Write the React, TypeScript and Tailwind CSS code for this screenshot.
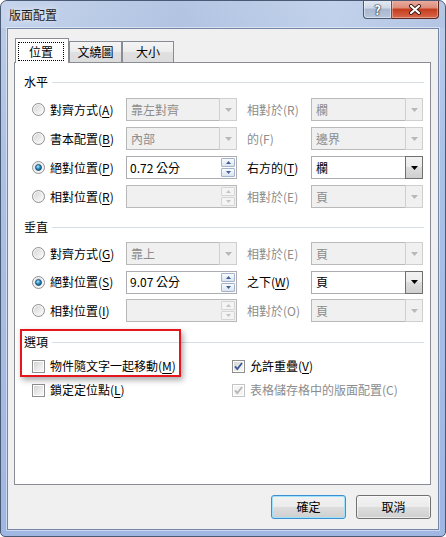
import React from 'react';

function Acc({ t, k, dis }: { t: string; k: string; dis?: boolean }) {
  return (
    <span className={dis ? 'whitespace-nowrap text-[#8c8c8c]' : 'whitespace-nowrap text-black'}>
      {t}({dis ? k : <span className="underline decoration-1 underline-offset-[2px]">{k}</span>})
    </span>
  );
}

function Radio({ on }: { on?: boolean }) {
  return (
    <svg width="13" height="13" viewBox="0 0 13 13" className="shrink-0">
      <defs>
        <linearGradient id="rb" x1="0" y1="0" x2="1" y2="1">
          <stop offset="0" stopColor="#d6d6d6" />
          <stop offset="1" stopColor="#fbfbfb" />
        </linearGradient>
        <radialGradient id="rd" cx="0.4" cy="0.35" r="0.7">
          <stop offset="0" stopColor="#b4eeff" />
          <stop offset="0.5" stopColor="#2b8fca" />
          <stop offset="1" stopColor="#0e4a79" />
        </radialGradient>
      </defs>
      <circle cx="6.5" cy="6.5" r="6" fill="#f4f4f4" stroke="#8f8f8f" />
      <circle cx="6.5" cy="6.5" r="4.4" fill="url(#rb)" />
      {on && <circle cx="6.5" cy="6.5" r="3" fill="url(#rd)" stroke="#1b4a6e" strokeWidth="0.8" />}
    </svg>
  );
}

function Check({ on, dis }: { on?: boolean; dis?: boolean }) {
  return (
    <svg width="13" height="13" viewBox="0 0 13 13" className="shrink-0">
      <defs>
        <linearGradient id="cb" x1="0" y1="0" x2="1" y2="1">
          <stop offset="0" stopColor="#d4d4d4" />
          <stop offset="1" stopColor="#fafafa" />
        </linearGradient>
      </defs>
      <rect x="0.5" y="0.5" width="12" height="12" fill="#fff" stroke={dis ? '#c4c4c4' : '#8f8f8f'} />
      <rect x="2" y="2" width="9" height="9" fill={dis ? '#f4f4f4' : 'url(#cb)'} />
      {on && (
        <path d="M3 6.3 L5.3 9 L10 3" fill="none" stroke={dis ? '#b5b5b5' : '#3b5896'} strokeWidth="1.8" />
      )}
    </svg>
  );
}

function Down({ c }: { c: string }) {
  return (
    <svg width="7" height="4" viewBox="0 0 7 4">
      <path d="M0 0 H7 L3.5 4 Z" fill={c} />
    </svg>
  );
}

function Combo({ v, dis, w }: { v: string; dis?: boolean; w: string }) {
  return (
    <div
      className={`flex h-[23px] shrink-0 border ${w} ${
        dis ? 'border-[#b9b9b9] bg-[#f0f0f0] text-[#8c8c8c]' : 'border-[#abadb3] bg-white text-black'
      }`}
    >
      <div className="flex flex-1 items-center pl-[4px]">{v}</div>
      {dis ? (
        <div className="-my-px -mr-px flex w-[18px] items-center justify-center border border-[#cfcfcf] bg-[#f0f0f0]">
          <Down c="#b8b8b8" />
        </div>
      ) : (
        <div className="-my-px -mr-px flex w-[18px] items-center justify-center border border-[#707070] bg-[linear-gradient(to_bottom,#f2f2f2_0%,#ebebeb_50%,#dddddd_50%,#cfcfcf_100%)]">
          <Down c="#000" />
        </div>
      )}
    </div>
  );
}

function Spin({ v, dis }: { v?: string; dis?: boolean }) {
  const btn = dis
    ? 'border-[#d5d5d5] bg-[#f4f4f4]'
    : 'border-[#a3b3cb] bg-[linear-gradient(to_bottom,#fafbfd,#dce4ef)]';
  const c = dis ? '#c4c4c4' : '#3e5f94';
  return (
    <div
      className={`flex h-[23px] w-[111px] shrink-0 border ${
        dis ? 'border-[#b9b9b9] bg-[#f0f0f0]' : 'border-[#abadb3] bg-white'
      }`}
    >
      <div className="flex flex-1 items-center pl-[3px]">{v}</div>
      <div className="flex w-[15px] flex-col gap-px py-px pr-px">
        <div className={`flex flex-1 items-center justify-center rounded-[1px] border ${btn}`}>
          <svg width="5" height="3" viewBox="0 0 5 3">
            <path d="M0 3 H5 L2.5 0 Z" fill={c} />
          </svg>
        </div>
        <div className={`flex flex-1 items-center justify-center rounded-[1px] border ${btn}`}>
          <svg width="5" height="3" viewBox="0 0 5 3">
            <path d="M0 0 H5 L2.5 3 Z" fill={c} />
          </svg>
        </div>
      </div>
    </div>
  );
}

function Heading({ t, cls }: { t: string; cls: string }) {
  return (
    <div className={`flex h-[16px] items-center pl-[9px] pr-[6px] ${cls}`}>
      <span>{t}</span>
      <div className="ml-[4px] h-px flex-1 bg-[#d5dfe5]" />
    </div>
  );
}

function Row({
  on,
  label,
  field,
  mid,
  right,
  h = 'h-[29px]',
}: {
  on?: boolean;
  label: React.ReactNode;
  field: React.ReactNode;
  mid: React.ReactNode;
  right: React.ReactNode;
  h?: string;
}) {
  return (
    <div className={`flex items-center pl-[17px] ${h}`}>
      <Radio on={on} />
      <div className="ml-[5px] w-[76px]">{label}</div>
      {field}
      <div className="w-[74px] pl-[10px]">{mid}</div>
      {right}
    </div>
  );
}

export default function App() {
  return (
    <div className="flex h-[537px] w-[446px] flex-col overflow-hidden rounded-t-[7px] rounded-b-[5px] border border-[#4a5a75] bg-[linear-gradient(to_bottom,#bccde9_0%,#abc1e6_30%,#9fb7e1_100%)] font-['Noto_Sans_CJK_TC','Noto_Sans',sans-serif] text-[12px] leading-none text-black">
      {/* title bar */}
      <div className="flex h-[27px] shrink-0 items-start justify-between bg-[linear-gradient(to_right,rgba(255,255,255,0.15),rgba(120,140,180,0.12)_40%,rgba(255,255,255,0.1)_75%,rgba(120,140,180,0.1))]">
        <div className="pl-[8px] pt-[8px] text-[#1a1a1a] [text-shadow:0_0_6px_rgba(255,255,255,0.95)]">版面配置</div>
        <div className="-mt-px flex pr-[6px]">
          <div className="flex h-[19px] w-[29px] items-center justify-center rounded-bl-[4px] border border-t-0 border-[#4b5a73] bg-[linear-gradient(to_bottom,#e6ecf5_0%,#cdd7e6_45%,#a8b7cf_50%,#b8c6dc_100%)] shadow-[inset_0_0_0_1px_rgba(255,255,255,0.45)]">
            <span className="text-[13px] font-bold text-white [text-shadow:0_0_1px_#1f2a3a,0_0_1px_#1f2a3a,0_0_2px_#1f2a3a]">?</span>
          </div>
          <div className="flex h-[19px] w-[47px] items-center justify-center rounded-br-[4px] border border-l-0 border-t-0 border-[#5a2a22] bg-[linear-gradient(to_bottom,#eab0a3_0%,#dc8b77_45%,#c43a1c_50%,#d9694c_100%)] shadow-[inset_0_0_0_1px_rgba(255,255,255,0.35)]">
            <svg width="14" height="11" viewBox="0 0 14 11">
              <path d="M3 2 L11 9 M11 2 L3 9" stroke="#3a1a14" strokeWidth="4" strokeLinecap="round" />
              <path d="M3 2 L11 9 M11 2 L3 9" stroke="#fff" strokeWidth="2.2" strokeLinecap="round" />
            </svg>
          </div>
        </div>
      </div>

      {/* client area */}
      <div className="mx-[6px] mb-[6px] flex flex-1 flex-col border border-[#7587a6] bg-[#f0f0f0] pt-[9px] shadow-[0_0_0_1px_rgba(255,255,255,0.45)]">
        {/* tabs */}
        <div className="flex h-[24px] items-end pl-[7px]">
          <div className="relative z-10 -mb-px flex h-[25px] w-[54px] items-start border-x border-t border-[#898c95] bg-white pl-[2px] pt-[3px]">
            <div className="flex h-[19px] w-[46px] items-center justify-center border border-dotted border-black">位置</div>
          </div>
          <div className="flex h-[21px] w-[53px] items-center justify-center border-x border-t border-[#898c95] bg-[linear-gradient(to_bottom,#f4f4f4_0%,#ececec_50%,#e0e0e0_50%,#dcdcdc_100%)]">
            文繞圖
          </div>
          <div className="flex h-[21px] w-[52px] items-center justify-center border-x border-t border-[#898c95] bg-[linear-gradient(to_bottom,#f4f4f4_0%,#ececec_50%,#e0e0e0_50%,#dcdcdc_100%)]">
            大小
          </div>
        </div>

        {/* tab panel */}
        <div className="relative ml-[6px] flex h-[423px] w-[417px] flex-col border border-[#898c95] bg-white">
          <Heading t="水平" cls="mt-[11px]" />
          <div className="mt-[5px] flex flex-col">
            <Row
              label={<Acc t="對齊方式" k="A" />}
              field={<Combo v="靠左對齊" dis w="w-[111px]" />}
              mid={<Acc t="相對於" k="R" dis />}
              right={<Combo v="欄" dis w="w-[112px]" />}
            />
            <Row
              label={<Acc t="書本配置" k="B" />}
              field={<Combo v="內部" dis w="w-[111px]" />}
              mid={<Acc t="的" k="F" dis />}
              right={<Combo v="邊界" dis w="w-[112px]" />}
            />
            <Row
              on
              label={<Acc t="絕對位置" k="P" />}
              field={<Spin v="0.72 公分" />}
              mid={<Acc t="右方的" k="T" />}
              right={<Combo v="欄" w="w-[112px]" />}
            />
            <Row
              label={<Acc t="相對位置" k="R" />}
              field={<Spin dis />}
              mid={<Acc t="相對於" k="E" dis />}
              right={<Combo v="頁" dis w="w-[112px]" />}
            />
          </div>

          <Heading t="垂直" cls="mt-[8px]" />
          <div className="mt-[4px] flex flex-col">
            <Row
              label={<Acc t="對齊方式" k="G" />}
              field={<Combo v="靠上" dis w="w-[111px]" />}
              mid={<Acc t="相對於" k="E" dis />}
              right={<Combo v="頁" dis w="w-[112px]" />}
            />
            <Row
              on
              h="h-[28px]"
              label={<Acc t="絕對位置" k="S" />}
              field={<Spin v="9.07 公分" />}
              mid={<Acc t="之下" k="W" />}
              right={<Combo v="頁" w="w-[112px]" />}
            />
            <Row
              label={<Acc t="相對位置" k="I" />}
              field={<Spin dis />}
              mid={<Acc t="相對於" k="O" dis />}
              right={<Combo v="頁" dis w="w-[112px]" />}
            />
          </div>

          <Heading t="選項" cls="mt-[9px]" />
          <div className="mt-[4px] flex flex-col">
            <div className="flex h-[24px] items-center pl-[17px]">
              <div className="flex w-[200px] items-center">
                <Check />
                <span className="ml-[5px]">
                  <Acc t="物件隨文字一起移動" k="M" />
                </span>
              </div>
              <Check on />
              <span className="ml-[5px]">
                <Acc t="允許重疊" k="V" />
              </span>
            </div>
            <div className="flex h-[24px] items-center pl-[17px]">
              <div className="flex w-[200px] items-center">
                <Check />
                <span className="ml-[5px]">
                  <Acc t="鎖定定位點" k="L" />
                </span>
              </div>
              <Check on dis />
              <span className="ml-[5px]">
                <Acc t="表格儲存格中的版面配置" k="C" dis />
              </span>
            </div>
          </div>

          {/* annotation box */}
          <div className="absolute left-[5px] top-[266px] h-[48px] w-[161px] border-2 border-[#e5171d] shadow-[2px_3px_6px_rgba(0,0,0,0.35)]" />
        </div>

        {/* buttons */}
        <div className="mt-[10px] flex justify-end gap-[10px] pr-[7px]">
          <button className="flex h-[24px] w-[75px] items-center justify-center rounded-[3px] border border-[#3c8fd0] bg-[linear-gradient(to_bottom,#f2f2f2_0%,#ebebeb_50%,#dddddd_50%,#cfcfcf_100%)] shadow-[inset_0_0_0_1px_#9ee3fb]">
            確定
          </button>
          <button className="flex h-[24px] w-[75px] items-center justify-center rounded-[3px] border border-[#707070] bg-[linear-gradient(to_bottom,#f2f2f2_0%,#ebebeb_50%,#dddddd_50%,#cfcfcf_100%)] shadow-[inset_0_0_0_1px_rgba(255,255,255,0.6)]">
            取消
          </button>
        </div>
      </div>
    </div>
  );
}
